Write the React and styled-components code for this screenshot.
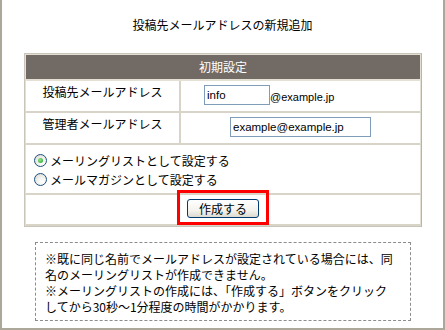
import React from "react";
import styled, { createGlobalStyle } from "styled-components";

const Global = createGlobalStyle`
  html, body { margin: 0; padding: 0; background: #fff; }
  body { font-family: "Noto Sans CJK JP", "Noto Sans", sans-serif; font-size: 12px; color: #000; }
`;

const Frame = styled.div`
  box-sizing: border-box;
  width: 445px;
  height: 330px;
  border-left: 2px solid #aca899;
  border-right: 2px solid #aca899;
  border-bottom: 2px solid #aca899;
  background: #fff;
  overflow: hidden;
`;

const Title = styled.div`
  margin-top: 17px;
  height: 16px;
  line-height: 16px;
  text-align: center;
  font-size: 12px;
`;

const Panel = styled.div`
  box-sizing: border-box;
  margin: 20px 0 0 22px;
  width: 398px;
  border: 1px solid #c9c5b9;
  border-right-color: #b8b4a8;
  background: #fff;
`;

const Header = styled.div`
  height: 24px;
  line-height: 24px;
  background: #726a64;
  color: #fff;
  text-align: center;
  border: 1px solid #e4e0d4;
  border-bottom-width: 2px;
`;

const Row = styled.div`
  display: grid;
  grid-template-columns: 155px 1fr;
  border-left: 1px solid #e4e0d4;
  border-right: 1px solid #e4e0d4;
  border-bottom: 2px solid #d8d4c8;
  height: ${(p) => p.h}px;
  box-sizing: border-box;
`;

const LabelCell = styled.div`
  border-right: 2px solid #d8d4c8;
  text-align: center;
  padding-top: 3px;
  line-height: 16px;
`;

const ValueCell = styled.div`
  display: flex;
  align-items: flex-end;
  justify-content: ${(p) => (p.center ? "center" : "flex-start")};
  padding: 4px 0 0 ${(p) => (p.center ? 0 : 23)}px;
  align-self: start;
`;

const TextInput = styled.div`
  box-sizing: border-box;
  width: ${(p) => p.w}px;
  height: 20px;
  border: 1px solid #7f9db9;
  background: #fff;
  font-family: "Liberation Sans", Arial, sans-serif;
  font-size: 11.5px;
  line-height: 18px;
  padding-left: 2px;
`;

const Suffix = styled.span`
  font-family: "Liberation Sans", Arial, sans-serif;
  font-size: 11px;
  line-height: 14px;
  margin-bottom: 1px;
`;

const FullRow = styled.div`
  border-left: 1px solid #e4e0d4;
  border-right: 1px solid #e4e0d4;
  border-bottom: 2px solid #d8d4c8;
  height: ${(p) => p.h}px;
  box-sizing: border-box;
  display: flex;
  flex-direction: column;
  align-items: ${(p) => (p.center ? "center" : "flex-start")};
  padding: ${(p) => p.pad};
`;

const RadioLine = styled.label`
  display: flex;
  align-items: center;
  height: 19px;
  gap: 3px;
`;

const RadioDot = styled.span`
  box-sizing: border-box;
  width: 13px;
  height: 13px;
  border-radius: 50%;
  border: 1px solid #1c5180;
  background: radial-gradient(circle at 65% 70%, #ffffff 0%, #f3f3ef 40%, #d6d5cd 100%);
  display: flex;
  align-items: center;
  justify-content: center;
  &::after {
    content: "";
    width: 5px;
    height: 5px;
    border-radius: 50%;
    background: ${(p) => (p.checked ? "radial-gradient(circle at 40% 40%, #8ee58e, #21a121)" : "transparent")};
  }
`;

const ButtonWrap = styled.div`
  position: relative;
  margin-top: 4px;
`;

const Button = styled.button`
  box-sizing: border-box;
  width: 72px;
  height: 19px;
  padding: 0;
  border: 1px solid #003c74;
  border-radius: 3px;
  background: linear-gradient(#ffffff, #f4f3ee 60%, #dcdad0);
  font-family: "Noto Sans CJK JP", sans-serif;
  font-size: 12px;
  line-height: 16px;
  color: #000;
`;

const Highlight = styled.span`
  position: absolute;
  left: -10px;
  top: -9px;
  width: 92px;
  height: 35px;
  box-sizing: border-box;
  border: 3px solid #ff0000;
  pointer-events: none;
`;

const Note = styled.div`
  box-sizing: border-box;
  margin: 15px 0 0 33px;
  width: 376px;
  height: 79px;
  border: 1px dashed #8c8c8c;
  padding: 8px 0 0 9px;
  line-height: 16px;
  font-size: 12px;
  white-space: nowrap;
`;

export default function App() {
  return (
    <>
      <Global />
      <Frame>
        <Title>投稿先メールアドレスの新規追加</Title>
        <Panel>
          <Header>初期設定</Header>
          <Row h={32}>
            <LabelCell>投稿先メールアドレス</LabelCell>
            <ValueCell>
              <TextInput w={66}>info</TextInput>
              <Suffix>@example.jp</Suffix>
            </ValueCell>
          </Row>
          <Row h={32}>
            <LabelCell>管理者メールアドレス</LabelCell>
            <ValueCell center>
              <TextInput w={141}>example@example.jp</TextInput>
            </ValueCell>
          </Row>
          <FullRow h={50} pad="6px 0 0 8px">
            <RadioLine>
              <RadioDot checked />
              メーリングリストとして設定する
            </RadioLine>
            <RadioLine>
              <RadioDot />
              メールマガジンとして設定する
            </RadioLine>
          </FullRow>
          <FullRow h={31} center pad="0">
            <ButtonWrap>
              <Highlight />
              <Button>作成する</Button>
            </ButtonWrap>
          </FullRow>
        </Panel>
        <Note>
          ※既に同じ名前でメールアドレスが設定されている場合には、同
          <br />
          名のメーリングリストが作成できません。
          <br />
          ※メーリングリストの作成には、「作成する」ボタンをクリック
          <br />
          してから30秒～1分程度の時間がかかります。
        </Note>
      </Frame>
    </>
  );
}
